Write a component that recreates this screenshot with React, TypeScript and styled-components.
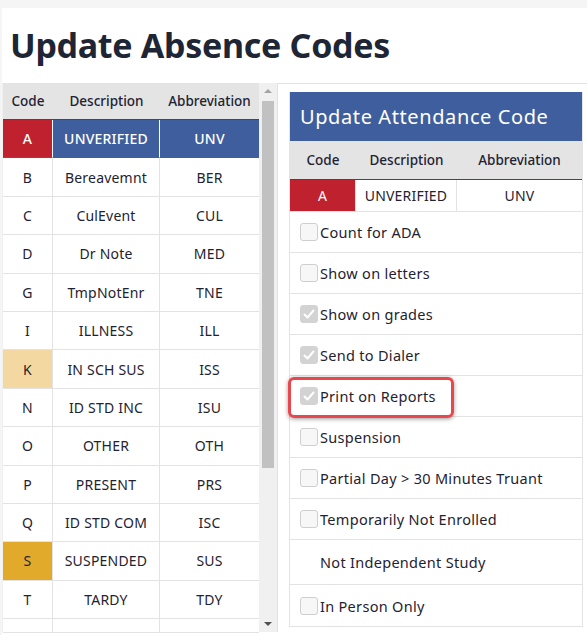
import React from 'react'
import styled, { createGlobalStyle } from 'styled-components'

const GlobalStyle = createGlobalStyle`
    html, body {
        margin: 0;
        padding: 0;
        background: #f5f5f5;
        font-family: 'Noto Sans', 'DejaVu Sans', sans-serif;
        color: #1f2230;
    }
    * {
        box-sizing: border-box;
    }
`

const Page = styled.div`
    margin: 8px 0 0 2px;
    background: #ffffff;
    height: 627px;
    overflow: hidden;
`

const Title = styled.h1`
    margin: 0;
    height: 75px;
    padding: 17px 0 0 8px;
    font-size: 34px;
    font-weight: 700;
    line-height: 40px;
    color: #1e2534;
    letter-spacing: -0.3px;
`

const Body = styled.div`
    display: flex;
    align-items: flex-start;
`

const ListPane = styled.div`
    display: flex;
    width: 275px;
    height: 549px;
    background: #f0f0f0;
`

const Grid = styled.div<{ cols: string }>`
    width: 256px;
    display: grid;
    grid-template-columns: ${({ cols }) => cols};
    align-content: start;
    background: #ffffff;
    height: 100%;
    margin-left: 1px;
`

const HeadCell = styled.div<{ h: number }>`
    height: ${({ h }) => h}px;
    display: flex;
    align-items: center;
    justify-content: center;
    background: #e4e4e4;
    border-bottom: 1.5px solid #2f4a78;
    font-size: 13.5px;
    font-weight: 500;
    color: #1e2233;
`

const Cell = styled.div<{ bg?: string; fg?: string; h: number; last?: boolean; sel?: boolean }>`
    height: ${({ h }) => h}px;
    display: flex;
    align-items: center;
    justify-content: center;
    font-size: 14px;
    letter-spacing: 0.2px;
    background: ${({ bg }) => bg || '#ffffff'};
    color: ${({ fg }) => fg || '#1f2230'};
    border-bottom: 1.5px solid #e3e3e3;
    border-right: ${({ last }) => (last ? 'none' : '1.5px solid #e3e3e3')};
    ${({ sel }) => (sel ? 'border-right-color: #ffffff; border-bottom-color: #3f5e9d; font-weight: 500;' : '')}
`

const Scrollbar = styled.div`
    width: 18px;
    height: 100%;
    background: #f0f0f0;
    display: flex;
    flex-direction: column;
    align-items: center;
    padding-top: 6px;
`

const Arrow = styled.div<{ down?: boolean }>`
    width: 0;
    height: 0;
    border-left: 4px solid transparent;
    border-right: 4px solid transparent;
    ${({ down }) => (down ? 'border-top: 4px solid #505050; margin-bottom: 6px;' : 'border-bottom: 4px solid #a3a3a3;')}
`

const Thumb = styled.div`
    width: 12px;
    height: 367px;
    margin-top: 8px;
    background: #c1c1c1;
`

const Spacer = styled.div`
    flex: 1;
`

const DetailPane = styled.div`
    flex: 1;
    height: 549px;
    border-top: 1.5px solid #dce3ec;
    border-left: 1.5px solid #dce3ec;
    padding: 8px 4px 0 11px;
    background: #ffffff;
`

const Card = styled.div`
    border-left: 1.5px solid #e3e3e3;
    border-right: 1.5px solid #e3e3e3;
`

const CardTitle = styled.div`
    height: 49px;
    background: #3f5e9d;
    color: #ffffff;
    font-size: 20px;
    letter-spacing: 0.6px;
    display: flex;
    align-items: center;
    padding-left: 10px;
`

const OptionRow = styled.div<{ h?: number }>`
    position: relative;
    height: ${({ h }) => h || 41}px;
    display: flex;
    align-items: center;
    padding-left: 10px;
    border-bottom: 1.5px solid #e3e3e3;
    font-size: 14.5px;
    letter-spacing: 0.3px;
    color: #1f2230;
`

const Box = styled.span<{ checked?: boolean; empty?: boolean }>`
    width: 18px;
    height: 18px;
    margin-right: 2px;
    border-radius: 3px;
    border: 1px solid ${({ checked }) => (checked ? '#d3d3d3' : '#cfcfcf')};
    background: ${({ checked }) => (checked ? '#d3d3d3' : '#f7f7f7')};
    visibility: ${({ empty }) => (empty ? 'hidden' : 'visible')};
    display: flex;
    align-items: center;
    justify-content: center;
`

const Callout = styled.span`
    position: absolute;
    left: -2px;
    top: 1px;
    width: 166px;
    height: 41px;
    border: 3px solid #e8474e;
    border-radius: 6px;
    box-shadow: 0 1px 4px rgba(0, 0, 0, 0.4);
    pointer-events: none;
`

const codes: [string, string, string, string?][] = [
    ['A', 'UNVERIFIED', 'UNV', 'sel'],
    ['B', 'Bereavemnt', 'BER'],
    ['C', 'CulEvent', 'CUL'],
    ['D', 'Dr Note', 'MED'],
    ['G', 'TmpNotEnr', 'TNE'],
    ['I', 'ILLNESS', 'ILL'],
    ['K', 'IN SCH SUS', 'ISS', '#f3d9a1'],
    ['N', 'ID STD INC', 'ISU'],
    ['O', 'OTHER', 'OTH'],
    ['P', 'PRESENT', 'PRS'],
    ['Q', 'ID STD COM', 'ISC'],
    ['S', 'SUSPENDED', 'SUS', '#e2aa2b'],
    ['T', 'TARDY', 'TDY'],
    ['', '', ''],
]

const options: { label: string; checked?: boolean; noBox?: boolean; callout?: boolean; h?: number }[] = [
    { label: 'Count for ADA' },
    { label: 'Show on letters' },
    { label: 'Show on grades', checked: true },
    { label: 'Send to Dialer', checked: true },
    { label: 'Print on Reports', checked: true, callout: true },
    { label: 'Suspension' },
    { label: 'Partial Day > 30 Minutes Truant' },
    { label: 'Temporarily Not Enrolled' },
    { label: 'Not Independent Study', noBox: true, h: 45 },
    { label: 'In Person Only', h: 42 },
]

function Check() {
    return (
        <svg width="14" height="14" viewBox="0 0 14 14" fill="none">
            <path d="M2.5 7.5L5.5 10.5L11.5 3.5" stroke="#ffffff" strokeWidth="2" strokeLinecap="round" strokeLinejoin="round" />
        </svg>
    )
}

export default function App() {
    return (
        <>
            <GlobalStyle />
            <Page>
                <Title>Update Absence Codes</Title>
                <Body>
                    <ListPane>
                        <Grid cols="50px 107px 99px">
                            <HeadCell h={37}>Code</HeadCell>
                            <HeadCell h={37}>Description</HeadCell>
                            <HeadCell h={37}>Abbreviation</HeadCell>
                            {codes.map(([code, desc, abbr, mark], i) => {
                                const sel = mark === 'sel'
                                const h = i === codes.length - 1 ? 14 : 38.4
                                return (
                                    <React.Fragment key={i}>
                                        <Cell h={h} sel={sel} bg={sel ? '#c0212f' : mark} fg={sel ? '#fff' : undefined}>
                                            {code}
                                        </Cell>
                                        <Cell h={h} sel={sel} bg={sel ? '#3f5e9d' : undefined} fg={sel ? '#fff' : undefined}>
                                            {desc}
                                        </Cell>
                                        <Cell h={h} sel={sel} last bg={sel ? '#3f5e9d' : undefined} fg={sel ? '#fff' : undefined}>
                                            {abbr}
                                        </Cell>
                                    </React.Fragment>
                                )
                            })}
                        </Grid>
                        <Scrollbar>
                            <Arrow />
                            <Thumb />
                            <Spacer />
                            <Arrow down />
                        </Scrollbar>
                    </ListPane>
                    <DetailPane>
                        <Card>
                            <CardTitle>Update Attendance Code</CardTitle>
                            <Grid cols="66px 101px 1fr" style={{ width: '100%', height: 'auto', marginLeft: 0 }}>
                                <HeadCell h={39}>Code</HeadCell>
                                <HeadCell h={39}>Description</HeadCell>
                                <HeadCell h={39}>Abbreviation</HeadCell>
                                <Cell h={32} bg="#c0212f" fg="#fff">
                                    A
                                </Cell>
                                <Cell h={32}>UNVERIFIED</Cell>
                                <Cell h={32} last>
                                    UNV
                                </Cell>
                            </Grid>
                            {options.map(o => (
                                <OptionRow key={o.label} h={o.h}>
                                    <Box checked={o.checked} empty={o.noBox}>
                                        {o.checked && <Check />}
                                    </Box>
                                    {o.label}
                                    {o.callout && <Callout />}
                                </OptionRow>
                            ))}
                        </Card>
                    </DetailPane>
                </Body>
            </Page>
        </>
    )
}
